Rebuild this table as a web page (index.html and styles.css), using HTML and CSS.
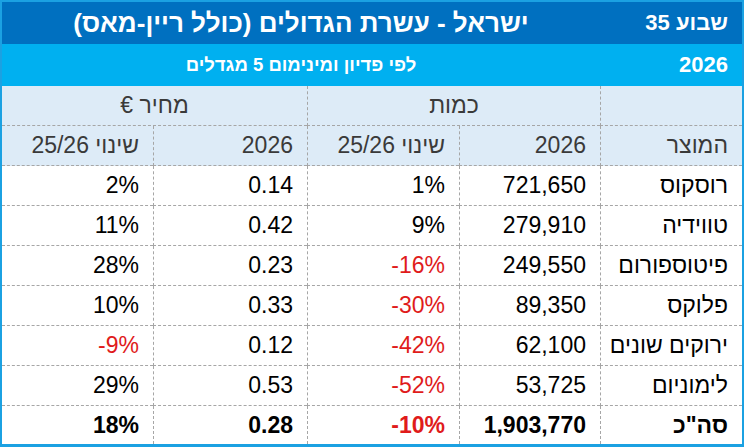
FILE: index.html
```html
<!DOCTYPE html>
<html lang="he" dir="rtl">
<head>
<meta charset="utf-8">
<title>ישראל - עשרת הגדולים</title>
<link rel="stylesheet" href="styles.css">
</head>
<body>
<table class="report">
  <colgroup>
    <col class="c-prod">
    <col class="c-qty">
    <col class="c-qchg">
    <col class="c-price">
    <col class="c-pchg">
  </colgroup>
  <tr class="title-row">
    <td class="week">שבוע 35</td>
    <td class="title" colspan="4">ישראל - עשרת הגדולים (כולל ריין-מאס)</td>
  </tr>
  <tr class="sub-row">
    <td class="year">2026</td>
    <td class="subtitle" colspan="4">לפי פדיון ומינימום 5 מגדלים</td>
  </tr>
  <tr class="head1">
    <td class="vl"></td>
    <td class="group vl" colspan="2">כמות</td>
    <td class="group" colspan="2">מחיר €</td>
  </tr>
  <tr class="head2">
    <td class="vl">המוצר</td>
    <td class="vl">2026</td>
    <td class="vl">שינוי 25/26</td>
    <td class="vl">2026</td>
    <td>שינוי 25/26</td>
  </tr>
  <tr class="data">
    <td class="vl">רוסקוס</td>
    <td class="vl num">721,650</td>
    <td class="vl num">1%</td>
    <td class="vl num">0.14</td>
    <td class="num">2%</td>
  </tr>
  <tr class="data">
    <td class="vl">טווידיה</td>
    <td class="vl num">279,910</td>
    <td class="vl num">9%</td>
    <td class="vl num">0.42</td>
    <td class="num">11%</td>
  </tr>
  <tr class="data">
    <td class="vl">פיטוספורום</td>
    <td class="vl num">249,550</td>
    <td class="vl num neg">-16%</td>
    <td class="vl num">0.23</td>
    <td class="num">28%</td>
  </tr>
  <tr class="data">
    <td class="vl">פלוקס</td>
    <td class="vl num">89,350</td>
    <td class="vl num neg">-30%</td>
    <td class="vl num">0.33</td>
    <td class="num">10%</td>
  </tr>
  <tr class="data">
    <td class="vl">ירוקים שונים</td>
    <td class="vl num">62,100</td>
    <td class="vl num neg">-42%</td>
    <td class="vl num">0.12</td>
    <td class="num neg">-9%</td>
  </tr>
  <tr class="data">
    <td class="vl">לימוניום</td>
    <td class="vl num">53,725</td>
    <td class="vl num neg">-52%</td>
    <td class="vl num">0.53</td>
    <td class="num">29%</td>
  </tr>
  <tr class="data total">
    <td class="vl">סה"כ</td>
    <td class="vl num">1,903,770</td>
    <td class="vl num neg">-10%</td>
    <td class="vl num">0.28</td>
    <td class="num">18%</td>
  </tr>
</table>
</body>
</html>
```

FILE: styles.css
```css
html, body {
  margin: 0;
  padding: 0;
  background: #ffffff;
}

body {
  font-family: "Liberation Sans", Arial, sans-serif;
  width: 744px;
  height: 447px;
  overflow: hidden;
}

.report {
  width: 744px;
  table-layout: fixed;
  border-collapse: separate;
  border-spacing: 0;
  border: 2px solid #1ba1e2;
  border-bottom-width: 3px;
  direction: rtl;
}

.c-prod { width: 142px; }
.c-qty { width: 141px; }
.c-qchg { width: 152px; }
.c-price { width: 154px; }
.c-pchg { width: 151px; }

.report td {
  padding: 0 14px 0 4px;
  text-align: right;
  vertical-align: middle;
  white-space: nowrap;
  overflow: hidden;
}

.title-row td {
  background: #0070c0;
  color: #ffffff;
  font-weight: bold;
  height: 42px;
}

.sub-row td {
  background: #00b0f0;
  color: #ffffff;
  font-weight: bold;
  height: 42px;
}

.report td.week { font-size: 22px; }
.report td.year { font-size: 22px; }

.report td.title {
  font-size: 26px;
  text-align: center;
  padding: 0;
}

.report td.subtitle {
  font-size: 18.5px;
  text-align: center;
  padding: 0;
}

.head1 td,
.head2 td {
  background: #ddebf7;
  color: #3a3a3a;
  font-size: 23px;
  height: 39px;
  border-bottom: 1px dashed #a6a6a6;
}

.report td.group {
  text-align: center;
  padding: 0;
}

.data td {
  color: #000000;
  font-size: 23px;
  height: 39px;
  border-bottom: 1px dashed #a6a6a6;
}

.report .vl {
  border-left: 1px dashed #a6a6a6;
}

.report .num {
  direction: ltr;
  text-align: right;
}

.report .neg {
  color: #e01b1b;
}

.data.total td {
  font-weight: bold;
  height: 38px;
  border-bottom: none;
}
```
